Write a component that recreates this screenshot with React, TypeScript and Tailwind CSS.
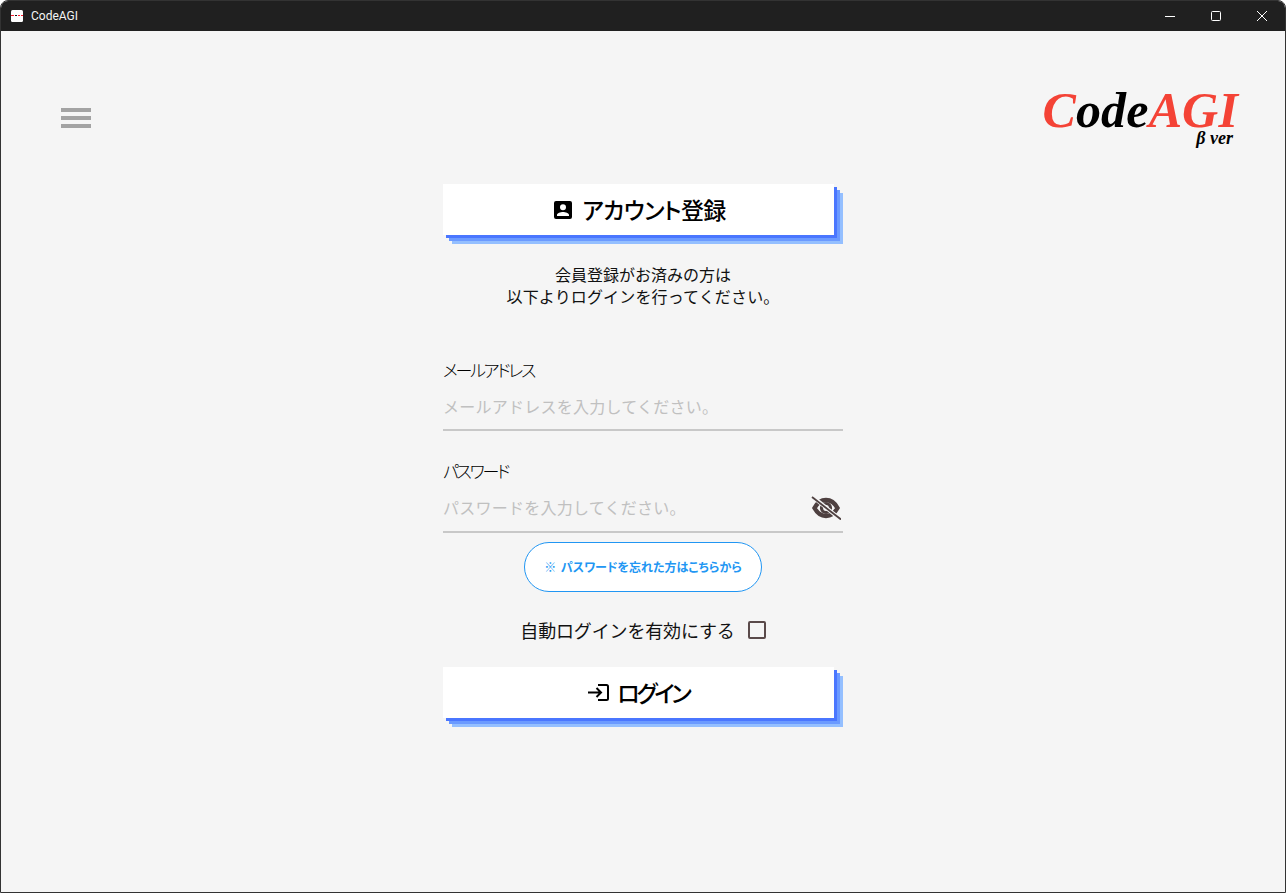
const jp = "font-['Noto_Sans_CJK_JP','Noto_Sans',sans-serif]";

function WinButton({ children }: { children: React.ReactNode }) {
  return <div className="w-[46px] h-[30px] flex items-center justify-center">{children}</div>;
}

function TitleBar() {
  return (
    <div className="h-[30px] shrink-0 bg-[#202020] flex items-center justify-between pl-[10px]">
      <div className="flex items-center gap-[8px]">
        <svg width="12" height="12" viewBox="0 0 12 12">
          <rect width="12" height="12" rx="1.5" fill="#fff" />
          <rect x="0" y="5" width="3" height="1" fill="#ff1a2e" />
          <rect x="4" y="5" width="2" height="1" fill="#111" />
          <rect x="7" y="5" width="2" height="1" fill="#ff1a2e" />
          <rect x="10" y="5" width="2" height="1" fill="#ff1a2e" />
        </svg>
        <span className="text-[12px] leading-none text-[#f4f4f4] font-['Roboto','Noto_Sans',sans-serif]">CodeAGI</span>
      </div>
      <div className="flex">
        <WinButton>
          <div className="w-[10px] h-[1px] bg-white" />
        </WinButton>
        <WinButton>
          <div className="w-[10px] h-[10px] border border-white rounded-[1.5px]" />
        </WinButton>
        <WinButton>
          <svg width="10" height="10" viewBox="0 0 10 10" stroke="#fff" strokeWidth="1">
            <path d="M0 0L10 10M10 0L0 10" />
          </svg>
        </WinButton>
      </div>
    </div>
  );
}

function ShadowButton({ icon, label, textClass }: { icon: React.ReactNode; label: string; textClass: string }) {
  return (
    <div className="w-[391px] h-[51px] bg-white flex items-center justify-center shadow-[3px_3px_0_#4a76ff,6px_6px_0_#6b9aff,9px_9px_0_#94bfff]">
      {icon}
      <span className={`text-[23px] leading-none font-medium text-black [font-feature-settings:'palt'] ${textClass}`}>{label}</span>
    </div>
  );
}

function Field({ label, placeholder, icon, boxClass }: { label: string; placeholder: string; icon?: React.ReactNode; boxClass: string }) {
  return (
    <div className="w-[400px]">
      <div className="text-[17px] leading-[24px] font-light text-black tracking-[-2.3px] [font-feature-settings:'palt']">{label}</div>
      <div className={`mt-[1px] flex items-center justify-between border-b-2 border-[#c8c8c8] ${boxClass}`}>
        <span className="text-[16px] leading-[24px] tracking-[0.25px] text-[#c0c0c0]">{placeholder}</span>
        {icon}
      </div>
    </div>
  );
}

export default function App() {
  return (
    <div className={`${jp} w-[1286px] h-[893px] bg-[#f5f5f5] flex flex-col border border-[#333] rounded-t-[8px] overflow-hidden`}>
      <TitleBar />
      <div className="flex-1 flex flex-col">
        <div className="flex justify-between items-start pl-[60px] pr-[47px] pt-[59px] h-[153px]">
          <div className="flex flex-col gap-[4px] mt-[18px] w-[30px]">
            <div className="h-[4px] bg-[#a3a3a3]" />
            <div className="h-[4px] bg-[#a3a3a3]" />
            <div className="h-[4px] bg-[#a3a3a3]" />
          </div>
          <div className="flex flex-col items-end">
            <div className="text-[50px] leading-[40px] font-bold italic font-['Liberation_Serif',serif] tracking-[0.15px]">
              <span className="text-[#f44336]">C</span>
              <span className="text-black">ode</span>
              <span className="text-[#f44336]">AGI</span>
            </div>
            <div className="mt-[1px] text-[18px] leading-[14px] font-bold italic font-['Liberation_Serif',serif] text-black pr-[5px]">β ver</div>
          </div>
        </div>

        <div className="w-[400px] ml-[442px] flex flex-col">
          <ShadowButton
            label="アカウント登録"
            textClass="tracking-[-0.6px]"
            icon={
              <svg width="18" height="18" viewBox="0 0 18 18" className="mr-[10px] ml-[3px]">
                <path
                  fillRule="evenodd"
                  fill="#000"
                  d="M2 0H16A2 2 0 0 1 18 2V16A2 2 0 0 1 16 18H2A2 2 0 0 1 0 16V2A2 2 0 0 1 2 0ZM9 3.2A3 3 0 1 0 9 9.2A3 3 0 1 0 9 3.2ZM3 14V15H15V14C15 12 11.5 11 9 11C6.5 11 3 12 3 14Z"
                />
              </svg>
            }
          />

          <p className="mt-[28px] text-center text-[16px] leading-[22px] text-[#111]">
            会員登録がお済みの方は
            <br />
            <span className="tracking-[0.15px]">以下よりログインを行ってください。</span>
          </p>

          <div className="mt-[51px] flex flex-col gap-[28px]">
            <Field label="メールアドレス" placeholder="メールアドレスを入力してください。" boxClass="h-[48px] pb-[1px]" />
            <Field
              label="パスワード"
              placeholder="パスワードを入力してください。"
              boxClass="h-[49px] pb-[2px]"
              icon={
                <svg width="30" height="24" viewBox="0 0 30 24" className="mr-[2px] mt-[3px]">
                  <path d="M3.5 12C6.5 6.5 10.5 4 15 4S23.5 6.5 26.5 12C23.5 17.5 19.5 20 15 20S6.5 17.5 3.5 12Z" fill="none" stroke="#4e4040" strokeWidth="4.4" />
                  <circle cx="15" cy="12" r="4.5" fill="none" stroke="#4e4040" strokeWidth="3.2" />
                  <path d="M2 1L29 23" stroke="#f5f5f5" strokeWidth="4" />
                  <path d="M1 1L30 23.5" stroke="#4e4040" strokeWidth="1.8" />
                </svg>
              }
            />
          </div>

          <div className="mt-[9px] flex justify-center">
            <div className="w-[238px] h-[50px] rounded-full border border-[#2196f3] bg-white flex items-center justify-center text-[12px] font-bold text-[#2196f3] [font-feature-settings:'palt']">
              <span className="mr-[2px]">※</span>
              <span>&nbsp;パスワードを忘れた方はこちらから</span>
            </div>
          </div>

          <div className="mt-[26px] flex items-center justify-center gap-[13px]">
            <span className="text-[18px] leading-[24px] text-[#111] tracking-[-0.15px]">自動ログインを有効にする</span>
            <div className="w-[18px] h-[18px] border-2 border-[#5a4a4a] rounded-[2px]" />
          </div>

          <div className="mt-[25px]">
            <ShadowButton
              label="ログイン"
              textClass="tracking-[-3.2px]"
              icon={
                <svg width="21" height="17" viewBox="0 0 21 17" fill="none" stroke="#000" strokeWidth="2" className="mr-[8px]">
                  <path d="M0 8.5H13M8.5 4L13 8.5L8.5 13" />
                  <path d="M10 1H18.5A1.5 1.5 0 0 1 20 2.5V14.5A1.5 1.5 0 0 1 18.5 16H10" />
                </svg>
              }
            />
          </div>
        </div>
      </div>
    </div>
  );
}
